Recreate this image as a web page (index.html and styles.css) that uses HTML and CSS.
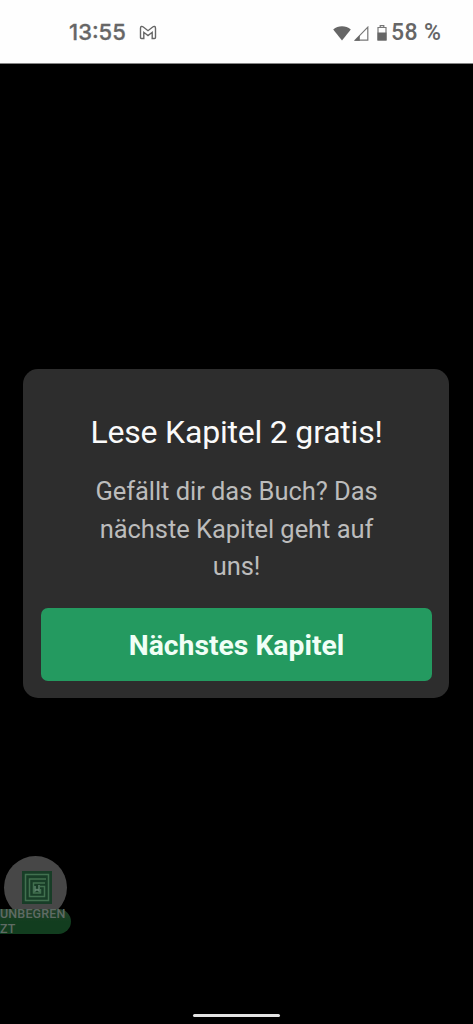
FILE: index.html
```html
<!DOCTYPE html>
<html lang="de">
<head>
<meta charset="utf-8">
<title>Kapitel 2</title>
<link rel="stylesheet" href="styles.css">
</head>
<body>
<div class="screen">
  <header class="status">
    <div class="status-left">
      <span class="clock">13:55</span>
      <svg class="mail" viewBox="0 0 18 15" width="18" height="15"><path d="M1.500 12.500V3.200C1.500 1.200 3 1 4.300 2L9 5.700 13.700 2c1.300-1 2.800-.8 2.800 1.200v9.300q0 1-1 1h-2.300V7.300L9 10.500 4.800 7.300v6.200H2.500q-1 0-1-1Z"/></svg>
    </div>
    <div class="status-right">
      <svg class="wifi" viewBox="0 0 18 15" width="18" height="15"><path d="M.2 3.400C5.200-.8 12.800-.8 17.800 3.400L9 14.500Z"/></svg>
      <svg class="signal" viewBox="0 0 15 15" width="15" height="15"><path class="line" d="M1.200 14.200 13.800 1.200V14.200Z"/><path d="M.5 14.700 5.800 9.300V14.700Z"/></svg>
      <svg class="battery" viewBox="0 0 10 16" width="10" height="16"><path class="line" d="M1 2.500H9V15H1ZM3.200 2V.7H6.800V2"/><path d="M.5 7.500H9.500V15.500H.5Z"/></svg>
      <span class="percent">58 %</span>
    </div>
  </header>
  <main class="reader">
    <section class="card">
      <h1 class="title">Lese Kapitel 2 gratis!</h1>
      <p class="message">Gefällt dir das Buch? Das<br>nächste Kapitel geht auf<br>uns!</p>
      <button class="next">Nächstes Kapitel</button>
    </section>
  </main>
  <aside class="badge">
    <div class="disc">
      <svg viewBox="0 0 30 33" width="30" height="33"><path class="tile" d="M0 0H30V33H0Z"/><path class="maze" d="M3.500 3.500H26.500V29.500H3.500ZM24 8H7.500V25.500H22.500V15.500H18M23 12H11.500V22H18.500V18"/><path class="mark" d="M13 15V20L15 18.500 17 20V14"/></svg>
    </div>
    <div class="pill"><div class="pill-text">UNBEGREN<br>ZT</div></div>
  </aside>
  <div class="home-bar"></div>
</div>
</body>
</html>
```
FILE: styles.css
```css
* { box-sizing: border-box; }
body { margin: 0; background: #000; font-family: Roboto, "Liberation Sans", sans-serif; }
.screen {
  position: relative;
  display: flex;
  flex-direction: column;
  width: 473px;
  height: 1024px;
  overflow: hidden;
  background: #000;
}
.status {
  display: flex;
  justify-content: space-between;
  height: 64px;
  padding: 0 31px 0 69px;
  background: #fefefe;
  border-bottom: 1px solid #858585;
  color: #666;
  font-family: Inter, Roboto, sans-serif;
  font-size: 22px;
  font-weight: 500;
  line-height: 64px;
}
.status-left, .status-right { display: flex; align-items: center; height: 64px; }
.status-left { gap: 13px; }
.clock { width: 57px; white-space: nowrap; -webkit-text-stroke: .3px #666; }
.percent {
  width: 51px;
  padding-top: 2px;
  white-space: nowrap;
  font-family: Roboto, sans-serif;
  font-size: 23px;
  letter-spacing: .400px;
}
.status svg { fill: #666; }
.status .mail { fill: none; stroke: #666; stroke-width: 1.400px; margin-top: 1px; }
.signal { margin-left: 3px; }
.wifi, .signal { margin-top: 2px; }
.battery { margin: 2px 4px 0 8px; }
.status .line { fill: none; stroke: #777; stroke-width: 1.200px; }
.reader { flex: 1; padding: 305px 24px 0 23px; }
.card {
  height: 329px;
  padding: 43px 17px 0 18px;
  border-radius: 15px;
  background: #2d2d2d;
  text-align: center;
}
.title {
  margin: 0;
  color: #fafafa;
  font-size: 32px;
  font-weight: 400;
  line-height: 40px;
  letter-spacing: -.200px;
  white-space: nowrap;
}
.message {
  margin: 21px 0 22.500px;
  color: #bcbcbc;
  font-size: 25.500px;
  line-height: 37.500px;
  letter-spacing: -.050px;
}
.next {
  display: block;
  width: 391px;
  height: 73px;
  padding: 2px 0 0;
  border: 0;
  border-radius: 7px;
  background: #249a60;
  color: #f0fff6;
  font: 700 28.300px/71px Roboto, sans-serif;
}
.badge {
  position: absolute;
  left: 0;
  top: 856px;
  width: 71px;
  height: 78px;
}
.disc {
  display: flex;
  justify-content: center;
  width: 63px;
  height: 63px;
  margin-left: 4px;
  padding: 15px 0 0 3px;
  border-radius: 50%;
  background: #474747;
}
.tile { fill: #183d27; }
.maze { fill: none; stroke: #41704f; stroke-width: 1.500px; }
.mark { fill: none; stroke: #5a806a; stroke-width: 1.500px; }
.pill {
  display: flow-root;
  height: 25px;
  margin-top: -10px;
  border-radius: 0 12.500px 12.500px 0;
  background: linear-gradient(#24402a, #123d1f 50%);
}
.pill-text {
  margin-top: -2px;
  color: #5f6b64;
  font-size: 12.500px;
  font-weight: 500;
  line-height: 14.500px;
  letter-spacing: .150px;
}
.home-bar {
  position: absolute;
  left: 193px;
  top: 1014px;
  width: 87px;
  height: 3px;
  border-radius: 2px;
  background: #e4e4e4;
}
```
